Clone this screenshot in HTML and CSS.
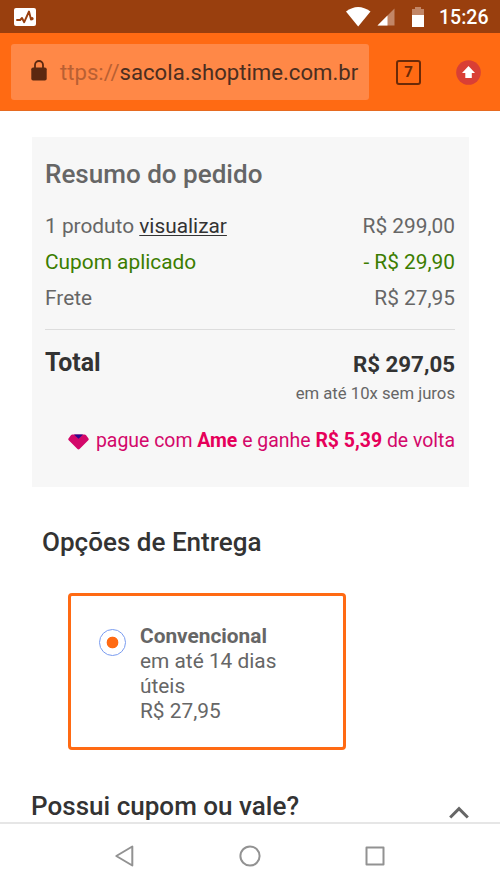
FILE: index.html
```
<!DOCTYPE html>
<html lang="pt-BR">
<head>
<meta charset="utf-8">
<title>Sacola</title>
<link rel="stylesheet" href="styles.css">
</head>
<body>
<div class="screen">
  <header class="status">
    <svg class="pulse" width="22" height="18" viewBox="0 0 22 18"><rect width="22" height="18" rx="2" fill="#fff"/><path d="M3 12h3.200l1.800-2 2.200 4.200L15 3.500l2 8 1.200-1" fill="none" stroke="#993f0e" stroke-width="1.900" stroke-linejoin="round" stroke-linecap="round"/><circle cx="18" cy="10.700" r="1.600" fill="#993f0e"/></svg>
    <svg class="signals" width="79" height="22" viewBox="0 0 79 22"><path d="M0 5.500Q12 -3.500 24.500 5.500L12.200 20.500Z" fill="#fff"/><path d="M31.500 19.500L48.500 2.500v17Z" fill="#c28666"/><path d="M31.500 19.500L41.500 9.500v10Z" fill="#fff"/><path d="M66 3h3V1h6v2h3v6H66Z" fill="#c28666"/><path d="M66 9h12v12H66Z" fill="#fff"/></svg>
    <span class="clock">15:26</span>
  </header>
  <div class="browser">
    <div class="address">
      <svg class="lock" width="16" height="21" viewBox="0 0 16 21"><rect x="0.300" y="7.500" width="15.400" height="13" rx="1.800" fill="#5c2810"/><path d="M4 8V5a4 4 0 0 1 8 0v3" fill="none" stroke="#5c2810" stroke-width="1.800"/></svg>
      <span class="url"><span class="scheme">ttps://</span>sacola.shoptime.com.br</span>
    </div>
    <div class="tabs">7</div>
    <svg class="update" width="25" height="25" viewBox="0 0 25 25"><circle cx="12.500" cy="12.500" r="12.300" fill="#d93f35"/><path d="M12.500 6L19 13h-3.200v5H9.300v-5H6Z" fill="#fff"/></svg>
  </div>
  <main class="page">
    <section class="summary">
      <h2 class="summary-title">Resumo do pedido</h2>
      <div class="row"><span>1 produto <a class="view">visualizar</a></span><span>R$ 299,00</span></div>
      <div class="row coupon"><span>Cupom aplicado</span><span>- R$ 29,90</span></div>
      <div class="row"><span>Frete</span><span>R$ 27,95</span></div>
      <div class="total"><span class="total-label">Total</span><span class="total-value">R$ 297,05</span></div>
      <p class="installments">em até 10x sem juros</p>
      <p class="ame">
        <svg class="gem" width="21" height="16" viewBox="0 0 21 16"><path d="M4.500 .5h12q1 0 1.600.8l2.400 3.200q.6 1-.2 1.800l-8.500 8.500q-1.300 1.200-2.600 0L.7 6.300q-.8-.8-.2-1.800L2.900 1.300Q3.500.5 4.500.5Z" fill="#d3086a"/><path d="M6 .5h9l-4.500 4.200Z" fill="#280b8c"/></svg>
        <span class="ame-text">pague com <b>Ame</b> e ganhe <b>R$ 5,39</b> de volta</span>
      </p>
    </section>
    <h2 class="delivery-title">Opções de Entrega</h2>
    <div class="option">
      <span class="radio"></span>
      <div class="option-text"><b>Convencional</b><br>em até 14 dias<br>úteis<br>R$ 27,95</div>
    </div>
    <div class="voucher">
      <h2 class="voucher-title">Possui cupom ou vale?</h2>
      <svg class="chevron" width="20" height="13" viewBox="0 0 20 13"><path d="M1.200 11.500L10 2.700l8.800 8.800" fill="none" stroke="#666" stroke-width="3"/></svg>
    </div>
  </main>
  <nav class="navbar">
    <svg width="22" height="22" viewBox="0 0 22 22"><path d="M18.300 1.500v19L2.300 11Z"/></svg>
    <svg width="22" height="22" viewBox="0 0 22 22"><circle cx="11" cy="11" r="9.600"/></svg>
    <svg width="22" height="22" viewBox="0 0 22 22"><rect x="2.500" y="2.500" width="17" height="17"/></svg>
  </nav>
</div>
</body>
</html>
```
FILE: styles.css
```
* { box-sizing: border-box; }
body { margin: 0; font-family: Roboto, sans-serif; color: #666; background: #fff; }
h2, p { margin: 0; font-weight: 500; white-space: nowrap; }
.screen { width: 500px; height: 889px; display: flex; flex-direction: column; overflow: hidden; }
.status { height: 33px; flex: none; display: flex; align-items: flex-start; padding: 0 12px 0 14px; background: #993f0e; }
.pulse { margin-top: 8px; }
.signals { margin: 6px 14px 0 auto; }
.clock { width: 49px; color: #fff; font-size: 19.500px; font-weight: 500; line-height: 35px; }
.browser { height: 78px; flex: none; display: flex; align-items: center; padding: 1px 19px 0 11px; background: #ff6a13; border-bottom: 1px solid #e66a20; }
.address { width: 358px; height: 56px; display: flex; align-items: center; padding-left: 20px; border-radius: 3px; background: #ff8847; }
.lock { margin-top: -3px; }
.url { margin-left: 13px; font-size: 22.150px; color: #4b2e20; white-space: nowrap; }
.scheme { color: #b96033; }
.tabs { width: 25px; height: 25px; margin-left: 27px; border: 2px solid #6b2a08; border-radius: 3px; font-size: 15px; font-weight: 700; line-height: 21px; text-align: center; color: #6b2a08; }
.update { margin-left: auto; }
.page { flex: 1; min-height: 0; padding: 26px 31px 0 32px; overflow: hidden; }
.summary { height: 350px; padding: 19px 14px 0 13px; background: #f7f7f7; }
.summary-title { font-size: 26.050px; line-height: 37px; margin-bottom: 15px; }
.row { height: 36px; display: flex; justify-content: space-between; font-size: 20.850px; line-height: 36px; white-space: nowrap; }
.coupon { color: #3b7d00; }
.view { color: #333; text-decoration: underline; text-decoration-thickness: 1px; text-underline-offset: 2px; }
.total { margin-top: 13px; padding-top: 16px; height: 53px; display: flex; justify-content: space-between; border-top: 1px solid #ddd; font-weight: 700; color: #333; line-height: 32px; }
.total-label { font-size: 24.900px; padding-top: 1px; }
.total-value { font-size: 22.300px; padding-top: 2px; }
.installments { font-size: 16.700px; font-weight: 400; line-height: 24px; text-align: right; }
.ame { margin-top: 19px; display: flex; align-items: center; justify-content: flex-end; font-size: 19.450px; font-weight: 400; line-height: 32px; color: #d3086a; }
.gem { margin: 2px 7px 0 0; }
.ame b { color: #e6005a; }
.delivery-title { margin: 37px 0 0 10px; font-size: 26.050px; line-height: 37px; color: #333; }
.option { width: 278px; height: 157px; margin: 32px 0 0 36px; padding: 30px 0 0 28px; display: flex; border: 3px solid #ff6a13; border-radius: 4px; }
.radio { width: 27px; height: 27px; margin-top: 3px; flex: none; border: 1px solid #7a9cf0; border-radius: 50%; background: radial-gradient(circle, #ff6a13 5.500px, #fff 6.200px); }
.option-text { margin-left: 14px; margin-top: -2px; font-size: 20.850px; line-height: 25px; white-space: nowrap; }
.voucher { margin-top: 37px; display: flex; justify-content: space-between; }
.voucher-title { margin-left: -1px; font-size: 26.050px; line-height: 39px; color: #333; }
.chevron { margin-top: 19px; }
.navbar { height: 67px; flex: none; display: flex; justify-content: center; gap: 103px; padding-top: 21px; border-top: 2px solid #e6e6e6; background: #fff; }
.navbar svg { fill: none; stroke: #929292; stroke-width: 2; stroke-linejoin: round; }
```
